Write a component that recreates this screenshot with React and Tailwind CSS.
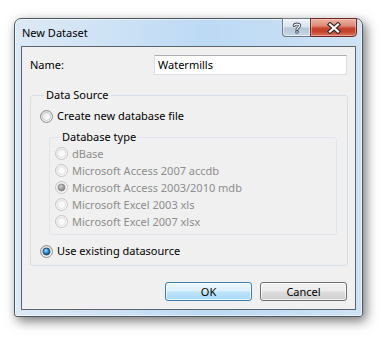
import React, { useId } from "react";

const font = { fontFamily: '"Segoe UI", "Noto Sans", sans-serif' };

function Radio({ checked = false, disabled = false }) {
  const id = useId().replace(/:/g, "");
  const ring = disabled ? "#c6c6c6" : "#8c8e90";
  const outerA = disabled ? "#ececec" : "#d4d4d4";
  return (
    <svg width="13" height="13" viewBox="0 0 13 13" className="shrink-0">
      <defs>
        <linearGradient id={`o${id}`} x1="0" y1="0" x2="1" y2="1">
          <stop offset="0" stopColor={outerA} />
          <stop offset="1" stopColor="#fbfbfb" />
        </linearGradient>
        <linearGradient id={`i${id}`} x1="0" y1="0" x2="1" y2="1">
          <stop offset="0" stopColor={disabled ? "#f4f4f4" : "#e6e6e6"} />
          <stop offset="1" stopColor="#ffffff" />
        </linearGradient>
        <radialGradient id={`d${id}`} cx="0.4" cy="0.35" r="0.7">
          <stop offset="0" stopColor={disabled ? "#d8d8d8" : "#aee6ff"} />
          <stop offset="0.45" stopColor={disabled ? "#a8a8a8" : "#2f9ce3"} />
          <stop offset="1" stopColor={disabled ? "#7a7a7a" : "#0d3f74"} />
        </radialGradient>
      </defs>
      <circle cx="6.5" cy="6.5" r="6" fill={`url(#o${id})`} stroke={ring} strokeWidth="1" />
      <circle cx="6.5" cy="6.5" r="4" fill={`url(#i${id})`} stroke={disabled ? "#dadada" : "#c4c4c4"} strokeWidth="0.8" />
      {checked && (
        <circle
          cx="6.5"
          cy="6.5"
          r="3.4"
          fill={`url(#d${id})`}
          stroke={disabled ? "#8a8a8a" : "#1c3a58"}
          strokeWidth="0.8"
        />
      )}
    </svg>
  );
}

function Option({ label, checked, disabled, rowClass }) {
  return (
    <div className={`flex items-center ${rowClass}`}>
      <Radio checked={checked} disabled={disabled} />
      <span className={`ml-[4px] ${disabled ? "text-[#8d8d8d]" : "text-black"}`}>
        {label}
      </span>
    </div>
  );
}

const dbTypes = [
  { label: "dBase" },
  { label: "Microsoft Access 2007 accdb" },
  { label: "Microsoft Access 2003/2010 mdb", checked: true },
  { label: "Microsoft Excel 2003 xls" },
  { label: "Microsoft Excel 2007 xlsx" },
];

export default function App() {
  return (
    <div
      className="w-[382px] h-[338px] bg-white overflow-hidden text-[11px] leading-[16px]"
      style={font}
    >
      <div className="ml-[14px] mt-[18px] w-[349px] h-[299px] flex flex-col rounded-t-[7px] rounded-b-[3px] border border-[#4f5861] bg-[linear-gradient(90deg,#dde9f5_0%,#cfe3f5_25%,#bcd9f5_55%,#c6def4_80%,#cfe3f4_100%)] shadow-[3px_4px_12px_rgba(0,0,0,0.55),inset_0_0_0_1px_rgba(255,255,255,0.55)]">
        {/* Title bar */}
        <div className="h-[27px] flex items-start">
          <div className="pl-[7px] pt-[6px] text-black">New Dataset</div>
          <div className="ml-auto mr-[5px] -mt-px flex">
            <button className="w-[28px] h-[19px] flex items-center justify-center rounded-bl-[4px] border border-r-0 border-[#6f7a86] bg-[linear-gradient(180deg,#eef3f8_0%,#d9e3ee_45%,#b6c6d7_55%,#c9d8e6_100%)] shadow-[inset_0_0_0_1px_rgba(255,255,255,0.5)]">
              <svg width="10" height="12" viewBox="0 0 10 12">
                <path d="M2.2 3.6 C2.2 1.6 7.6 1.4 7.6 3.8 C7.6 5.6 5 5.6 5 7.6" fill="none" stroke="#3b4550" strokeWidth="3" strokeLinecap="round" />
                <rect x="3.4" y="8.6" width="3.2" height="2.8" rx="0.6" fill="#3b4550" />
                <path d="M2.2 3.6 C2.2 1.6 7.6 1.4 7.6 3.8 C7.6 5.6 5 5.6 5 7.6" fill="none" stroke="#ffffff" strokeWidth="1.2" strokeLinecap="round" />
                <rect x="4.2" y="9.4" width="1.6" height="1.2" fill="#ffffff" />
              </svg>
            </button>
            <button className="w-[47px] h-[19px] flex items-center justify-center rounded-br-[4px] border border-[#6e2a20] bg-[linear-gradient(180deg,#eab4a6_0%,#de8b78_40%,#c7442e_55%,#c4432d_75%,#de7a62_100%)] shadow-[inset_0_0_0_1px_rgba(255,210,200,0.45)]">
              <svg width="16" height="12" viewBox="0 0 16 12">
                <path d="M4 2.5 L12 9.5 M12 2.5 L4 9.5" stroke="#3d2a28" strokeWidth="4.4" strokeLinecap="square" />
                <path d="M4 2.5 L12 9.5 M12 2.5 L4 9.5" stroke="#ffffff" strokeWidth="2.2" strokeLinecap="square" />
              </svg>
            </button>
          </div>
        </div>

        {/* Client area */}
        <div className="mx-[6px] h-[264px] border border-[#5e646b] bg-[#f0f0f0] flex flex-col">
          <div className="flex items-center pt-[8px] pl-[8px]">
            <span className="w-[124px] text-black">Name:</span>
            <div className="w-[193px] h-[20px] bg-white border border-[#dbe0e6] border-t-[#abadb3] flex items-center pl-[3px] text-black">
              Watermills
            </div>
          </div>

          <fieldset className="mt-[12px] ml-[8px] w-[318px] border border-[#d5dfe5] rounded-[3px] pl-[9px] pb-[6px]">
            <legend className="ml-[4px] px-[2px] text-black">Data Source</legend>
            <Option label="Create new database file" rowClass="h-[16px] mt-[5px]" />

            <fieldset className="mt-[5px] ml-[9px] w-[288px] border border-[#dfe5ea] rounded-[3px] pl-[5px] pb-[4px]">
              <legend className="ml-[5px] px-[2px] text-black">Database type</legend>
              {dbTypes.map((t) => (
                <Option
                  key={t.label}
                  label={t.label}
                  checked={t.checked}
                  disabled
                  rowClass="h-[17px]"
                />
              ))}
            </fieldset>

            <Option label="Use existing datasource" checked rowClass="h-[16px] mt-[8px]" />
          </fieldset>

          <div className="mt-[16px] mr-[8px] flex justify-end gap-[8px]">
            <button className="w-[87px] h-[19px] rounded-[3px] border border-[#3c7fb1] bg-[linear-gradient(180deg,#ecf6fd_0%,#dbf0fc_48%,#bde4fb_52%,#a9d9f5_100%)] shadow-[inset_0_0_0_1px_rgba(255,255,255,0.7)] text-black">
              OK
            </button>
            <button className="w-[87px] h-[19px] rounded-[3px] border border-[#707070] bg-[linear-gradient(180deg,#f2f2f2_0%,#ebebeb_48%,#dddddd_52%,#cfcfcf_100%)] shadow-[inset_0_0_0_1px_rgba(255,255,255,0.7)] text-black">
              Cancel
            </button>
          </div>
        </div>
      </div>
    </div>
  );
}
